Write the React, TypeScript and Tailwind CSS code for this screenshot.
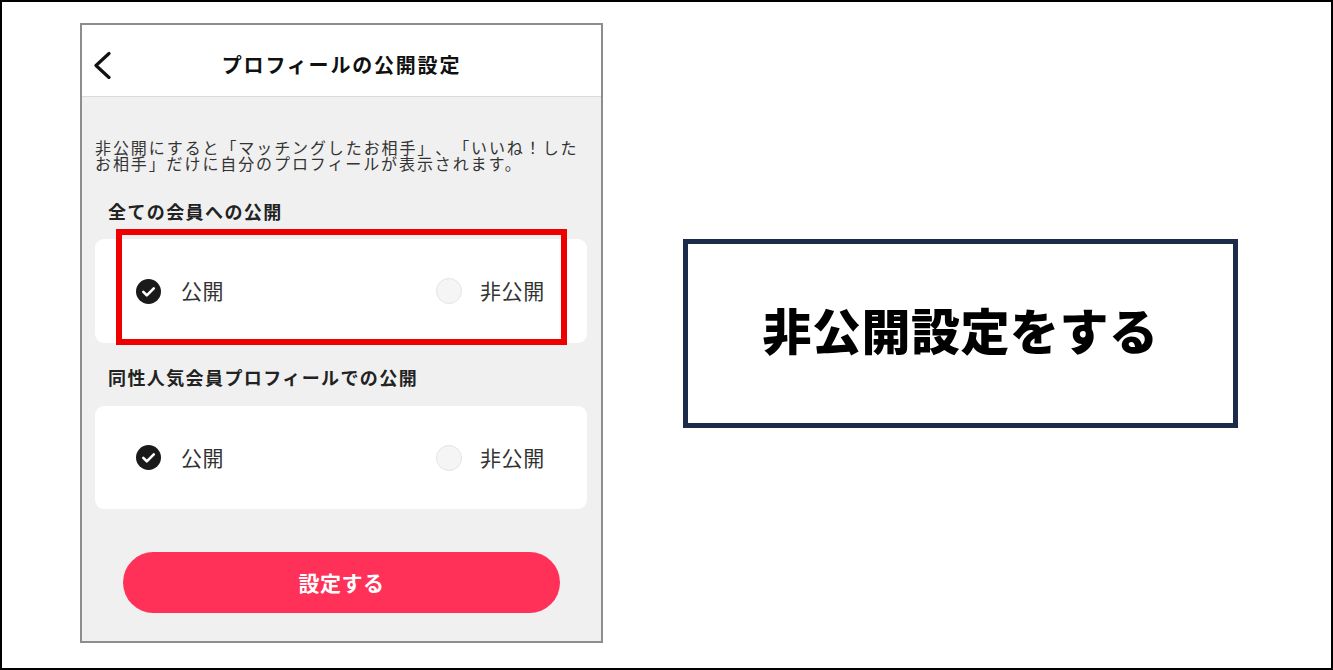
const jp = "font-['Noto_Sans_CJK_JP','Noto_Sans',sans-serif]";

const Checked = () => (
  <svg width="25" height="25" viewBox="0 0 25 25" className="shrink-0">
    <circle cx="12.5" cy="12.5" r="12.5" fill="#1a1a1a" />
    <path d="M7.3 12.9l3.5 3.4 7-7" fill="none" stroke="#fff" strokeWidth="2.6" strokeLinecap="round" strokeLinejoin="round" />
  </svg>
);

const Unchecked = () => (
  <div className="w-[26px] h-[26px] shrink-0 rounded-full bg-[#f5f5f5] border border-[#e4e4e4]" />
);

const OptionCard = ({ marked }: { marked?: boolean }) => (
  <div className="relative mx-[13px] w-[492px] bg-white rounded-[9px] flex items-center justify-between pl-[41px] pr-[42px]">
    <div className="flex items-center gap-[20px]">
      <Checked />
      <span className="text-[21px] tracking-[0.5px] text-[#333]">公開</span>
    </div>
    <div className="flex items-center gap-[18px]">
      <Unchecked />
      <span className="text-[21px] tracking-[0.7px] text-[#333]">非公開</span>
    </div>
    {marked && (
      <div className="absolute top-[-10px] left-[21px] w-[451px] h-[116px] border-[6px] border-[#ee0000]" />
    )}
  </div>
);

export default function App() {
  return (
    <div className={`${jp} w-[1333px] h-[670px] border-2 border-black bg-white flex items-start [text-spacing-trim:space-all]`}>
      {/* phone screen */}
      <div className="ml-[78px] mt-[21px] w-[523px] h-[620px] border-2 border-[#8d8d8d] bg-[#f0f0f0] flex flex-col">
        <div className="h-[72px] bg-white border-b border-[#dadada] grid grid-cols-[40px_1fr_40px] items-center pt-2">
          <svg width="20" height="28" viewBox="0 0 20 28" className="ml-[10px]">
            <path d="M17 2.5L4 14.5l13 12" fill="none" stroke="#111" strokeWidth="3.2" strokeLinecap="round" strokeLinejoin="round" />
          </svg>
          <h1 className="text-center text-[20px] tracking-[1.8px] font-bold text-[#111]">プロフィールの公開設定</h1>
          <div />
        </div>

        <p className="mt-[42px] pl-[13px] text-[16px] tracking-[1.9px] leading-[16px] text-[#333]">
          非公開にすると「マッチングしたお相手」、「いいね！した
          <br />
          お相手」だけに自分のプロフィールが表示されます。
        </p>

        <div className="mt-[31px] pl-[26px] text-[18px] tracking-[1.4px] leading-[19px] font-bold text-[#222]">全ての会員への公開</div>
        <div className="mt-[18px] h-[104px] flex">
          <OptionCard marked />
        </div>

        <div className="mt-[25px] pl-[26px] text-[18px] tracking-[1.4px] leading-[19px] font-bold text-[#222]">同性人気会員プロフィールでの公開</div>
        <div className="mt-[19px] h-[103px] flex">
          <OptionCard />
        </div>

        <button className="mt-[43px] mx-auto w-[437px] h-[61px] rounded-full bg-[#ff3159] text-white text-[21px] tracking-[0.5px] font-bold">
          設定する
        </button>
      </div>

      {/* caption box */}
      <div className="ml-[80px] mt-[237px] w-[555px] h-[189px] border-[5px] border-[#1c2b4a] flex items-center justify-center pb-[10px]">
        <span className="text-[49px] tracking-[0.5px] font-black text-black">非公開設定をする</span>
      </div>
    </div>
  );
}
